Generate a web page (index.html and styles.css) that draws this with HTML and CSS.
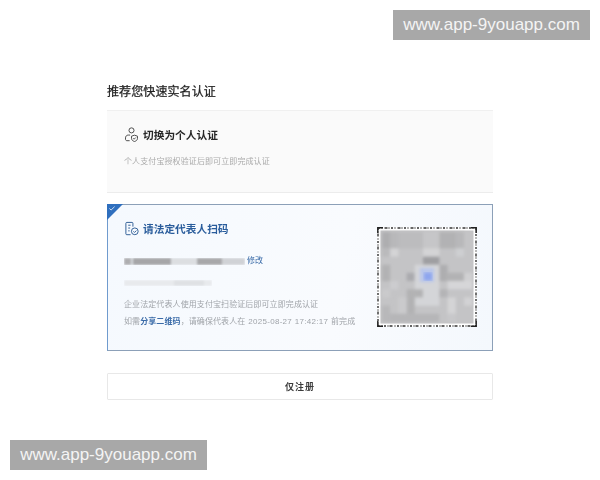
FILE: index.html
```html
<!DOCTYPE html>
<html lang="zh-CN">
<head>
<meta charset="utf-8">
<title>推荐您快速实名认证</title>
<link rel="stylesheet" href="styles.css">
</head>
<body>
<main class="page">
  <h1 class="title">推荐您快速实名认证</h1>
  <section class="card card-personal">
    <div class="heading">
      <svg class="icon" viewBox="0 0 16 16" fill="none" stroke="#444" stroke-width="1">
        <circle cx="8" cy="3.6" r="2.7"/>
        <path d="M6.5 8.6H4.6C2.9 8.6 1.6 9.9 1.6 11.6V13C1.6 14 2.2 14.6 3.2 14.6H6"/>
        <path d="M11.2 8.7l3.2 1.1v2.3c0 1.6-1.3 2.8-3.2 3.4-1.9-.6-3.2-1.8-3.2-3.4V9.800z"/>
        <path d="M9.800 12l1 1 1.800-1.800"/>
      </svg>
      <span>切换为个人认证</span>
    </div>
    <p class="note">个人支付宝授权验证后即可立即完成认证</p>
  </section>
  <section class="card card-company">
    <div class="corner"><svg class="tick" viewBox="0 0 8 6" fill="none" stroke="#fff" stroke-width="1"><path d="M.5 3l2.300 2L7.500.5"/></svg></div>
    <div class="details">
      <div class="heading heading-blue">
        <svg class="icon" viewBox="0 0 16 16" fill="none" stroke="#2a5a93" stroke-width="1">
          <path d="M7 14.600H3a1 1 0 0 1-1-1V2.500a1 1 0 0 1 1-1h5.500a1 1 0 0 1 1 1V6"/>
          <path d="M4.500 4.500h2.500M4.500 7.500h2M4.500 10.500h1.500"/>
          <circle cx="11.500" cy="11" r="3.600"/>
          <path d="M10 11l1.200 1.200 2-2"/>
        </svg>
        <span>请法定代表人扫码</span>
      </div>
      <div class="masked-row">
        <svg class="mask-one" viewBox="0 0 121 7" preserveAspectRatio="none">
          <defs><filter id="soft" x="-3%" y="-30%" width="106%" height="160%"><feGaussianBlur stdDeviation="1.300"/></filter></defs>
          <g filter="url(#soft)">
            <rect width="121" height="7" fill="#d6d9dd"/>
            <rect x="0" width="7" height="7" fill="#aeaeb0"/>
            <rect x="9" width="38" height="7" fill="#a6a6a8"/>
            <rect x="47" width="26" height="7" fill="#dcdee1"/>
            <rect x="73" width="25" height="7" fill="#a8a8aa"/>
            <rect x="98" width="23" height="7" fill="#d0d2d6"/>
          </g>
        </svg>
        <a class="link">修改</a>
      </div>
      <svg class="mask-two" viewBox="0 0 88 6" preserveAspectRatio="none">
        <g filter="url(#soft)"><rect width="88" height="6" fill="#e8eaed"/><rect x="50" width="30" height="6" fill="#dfe1e4"/></g>
      </svg>
      <p class="desc">企业法定代表人使用支付宝扫验证后即可立即完成认证</p>
      <p class="desc desc-second">如需<b>分享二维码</b>，请确保代表人在 <span class="date">2025-08-27 17:42:17</span> 前完成</p>
    </div>
    <svg class="qr" viewBox="0 0 100 100">
      <defs><filter id="qrsoft" x="-5%" y="-5%" width="110%" height="110%"><feGaussianBlur stdDeviation="1.400"/></filter>
      <filter id="halo" x="-80%" y="-80%" width="260%" height="260%"><feGaussianBlur stdDeviation="1.800"/></filter></defs>
      <rect width="100" height="100" fill="#fff"/>
      <rect x="1" y="1" width="98" height="98" fill="none" stroke="#333" stroke-width="1.400" stroke-dasharray="2 1.500 1 2 3 1 1 1.500"/>
      <path d="M.8 6V.8H6M94 .8h5.200V6M.8 94v5.200H6M94 99.200h5.200V94" fill="none" stroke="#222" stroke-width="1.400"/>
      <rect x="3.500" y="3.500" width="93" height="93" fill="#c4c4c6"/>
      <g filter="url(#qrsoft)">
        <rect x="5" y="5" width="16.400" height="16.400" fill="#aeaeb0"/>
        <rect x="13.200" y="5" width="8.200" height="16.400" fill="#b8b8ba"/>
        <rect x="21.400" y="5" width="24.600" height="16.400" fill="#bcbcbe"/>
        <rect x="46" y="5" width="16.400" height="16.400" fill="#c6c6c8"/>
        <rect x="62.400" y="5" width="16.400" height="16.400" fill="#b2b2b4"/>
        <rect x="78.800" y="5" width="8.200" height="16.400" fill="#b8b8ba"/>
        <rect x="5" y="21.400" width="8.200" height="8.200" fill="#bababc"/>
        <rect x="13.200" y="21.400" width="8.200" height="8.200" fill="#d4d4d6"/>
        <rect x="46" y="21.400" width="16.400" height="8.200" fill="#d4d4d6"/>
        <rect x="78.800" y="21.400" width="8.200" height="8.200" fill="#cecfd1"/>
        <rect x="46" y="29.600" width="16.400" height="8.200" fill="#9f9fa2"/>
        <rect x="5" y="37.800" width="8.200" height="16.400" fill="#b2b2b4"/>
        <rect x="29.600" y="45.800" width="8.200" height="8.200" fill="#aaaaae"/>
        <rect x="37.800" y="37.800" width="24.600" height="41" fill="#d4d5d8"/>
        <rect x="62.400" y="37.800" width="8.200" height="16.400" fill="#aeaeb0"/>
        <rect x="70.600" y="45.800" width="16.400" height="8.200" fill="#b2b2b4"/>
        <rect x="87" y="45.800" width="8.200" height="8.200" fill="#d0d0d2"/>
        <rect x="13.200" y="54" width="8.200" height="8.200" fill="#cccccf"/>
        <rect x="70.600" y="54" width="24.600" height="8.200" fill="#d6d6d8"/>
        <rect x="5" y="62.200" width="8.200" height="8.200" fill="#cacacc"/>
        <rect x="37.800" y="62.200" width="8.200" height="8.200" fill="#b2b2b4"/>
        <rect x="29.600" y="62.200" width="8.200" height="24.600" fill="#b2b2b4"/>
        <rect x="62.400" y="62.200" width="8.200" height="8.200" fill="#b4b4b6"/>
        <rect x="21.400" y="70.400" width="8.200" height="16.400" fill="#cacacc"/>
        <rect x="70.600" y="70.400" width="8.200" height="16.400" fill="#d4d4d6"/>
        <rect x="87" y="70.400" width="8.200" height="8.200" fill="#d2d2d4"/>
        <rect x="5" y="78.600" width="8.200" height="16.400" fill="#b8b8ba"/>
        <rect x="13.200" y="86.800" width="49.200" height="8.200" fill="#b6b6b8"/>
        <rect x="70.600" y="86.800" width="8.200" height="8.200" fill="#c8c8ca"/>
      </g>
      <rect x="43" y="41" width="14" height="14" fill="#b9c6ea" filter="url(#halo)"/>
      <rect x="47" y="45.500" width="8" height="8" fill="#8ea6ee" filter="url(#qrsoft)"/>
    </svg>
  </section>
  <button class="register">仅注册</button>
</main>
<div class="mark mark-top">www.app-9youapp.com</div>
<div class="mark mark-bottom">www.app-9youapp.com</div>
</body>
</html>
```
FILE: styles.css
```css
* { box-sizing: border-box; }
html, body { margin: 0; height: 100%; }
body {
  background: #fff;
  color: #222;
  font-family: "Liberation Sans", "Noto Sans CJK SC", sans-serif;
  overflow: hidden;
}
.page {
  width: 386px;
  margin-left: 107px;
  padding-top: 85px;
  display: flex;
  flex-direction: column;
  filter: blur(0.4px);
}
.title {
  margin: 0 0 10px;
  font-size: 12px;
  line-height: 15px;
  font-weight: 400;
  letter-spacing: 0.1px;
  color: #1e1e1e;
  -webkit-text-stroke: 0.25px #1e1e1e;
}
.card { position: relative; }
.card-personal {
  height: 83px;
  padding: 15px 17px 0;
  background: #fafafa;
  border-top: 1px solid #f0f0f0;
  border-bottom: 1px solid #ececec;
  margin-bottom: 11px;
}
.heading {
  display: flex;
  align-items: center;
  gap: 4px;
  height: 16px;
  font-size: 10.700px;
  font-weight: 700;
  color: #262626;
}
.icon { width: 15px; height: 15px; flex: none; }
.note {
  margin: 14px 0 0;
  font-size: 8px;
  line-height: 12px;
  letter-spacing: 0.1px;
  color: #aaa;
}
.card-company {
  display: flex;
  justify-content: space-between;
  height: 147px;
  padding: 15px 15px 0 16px;
  background: linear-gradient(100deg, #f5f9fe, #f9fbfe 60%, #f4f8fd);
  border: 1px solid #8ca0b8;
  border-left-color: #6f9bce;
}
.corner {
  position: absolute;
  left: -1px;
  top: -1px;
  width: 16px;
  height: 16px;
  background: #2f6fbe;
  clip-path: polygon(0 0, 100% 0, 0 100%);
}
.tick { display: block; width: 6px; height: 5px; margin: 2px 0 0 2px; }
.details { width: 240px; }
.heading-blue { color: #2a5d9c; }
.masked-row {
  display: flex;
  align-items: center;
  gap: 2px;
  margin-top: 19px;
  height: 12px;
}
.mask-one { width: 121px; height: 7px; flex: none; }
.link { font-size: 8px; line-height: 12px; color: #3a6ba8; }
.mask-two { display: block; width: 88px; height: 6px; margin-top: 13px; }
.desc {
  margin: 13px 0 0;
  font-size: 8px;
  line-height: 12px;
  letter-spacing: 0.09px;
  color: #a0a4a9;
  white-space: nowrap;
}
.desc-second { margin-top: 5px; }
.desc b { color: #3a6ba8; font-weight: 700; }
.date { margin: 0 0.5px; letter-spacing: 0.3px; }
.qr { width: 100px; height: 100px; margin-top: 7px; flex: none; }
.register {
  height: 27px;
  margin-top: 22px;
  padding: 0;
  background: #fff;
  border: 1px solid #e8e8e8;
  border-radius: 1px;
  font: 700 9px "Liberation Sans", "Noto Sans CJK SC", sans-serif;
  color: #3c3c3c;
  letter-spacing: 1px;
}
.mark {
  position: absolute;
  width: 197px;
  height: 30px;
  background: #a8a8a8;
  color: #f4f4f4;
  font-size: 17px;
  line-height: 30px;
  text-align: center;
  white-space: nowrap;
}
.mark-top { left: 393px; top: 10px; }
.mark-bottom { left: 10px; top: 440px; }
```
